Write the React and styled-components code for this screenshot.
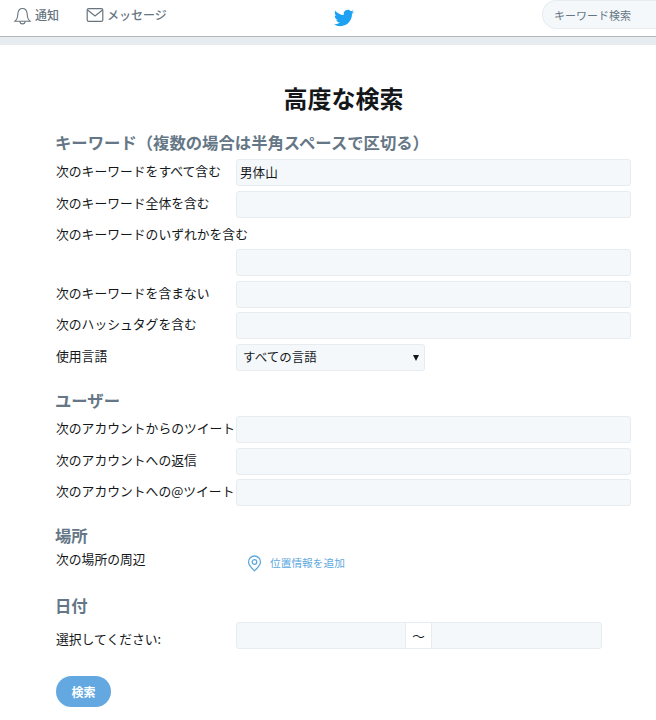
import React from "react";
import styled, { createGlobalStyle } from "styled-components";

const Global = createGlobalStyle`
  html, body { margin: 0; padding: 0; background: #fff; }
  body { font-family: "Noto Sans CJK JP", "Liberation Sans", sans-serif; color: #14171a; overflow: hidden; }
  * { box-sizing: border-box; }
`;
const Page = styled.div`width: 656px; height: 720px; overflow: hidden;`;
const TopBar = styled.header`
  height: 37px; display: grid; grid-template-columns: 334px 20px 1fr; align-items: center;
  border-bottom: 1px solid #b4b8bb; background: #fff;
`;
const Nav = styled.nav`display: flex; align-items: center; padding-left: 13px; gap: 27px; height: 32px; margin-top: -6px;`;
const NavItem = styled.span`display: flex; align-items: center; gap: 3px; font-size: 12px; font-weight: 500; color: #66757f; line-height: 16px;`;
const Logo = styled.svg`width: 20px; height: 20px; fill: #1da1f2; display: block; margin-top: -1px;`;
const SearchWrap = styled.div`display: flex; justify-content: flex-end; margin-top: -7px;`;
const SearchBox = styled.div`
  width: 114px; height: 29px; border-radius: 15px 0 0 15px;
  background: #f5f8fa; border: 1px solid #e6ecf0; border-right: 0;
  font-size: 11px; line-height: 29px; color: #657786; padding-left: 11px;
`;
const Band = styled.div`height: 8px; background: #e6ecf0;`;
const Main = styled.main`padding: 0 25px 0 56px;`;
const Title = styled.h1`margin: 0; padding-top: 36px; height: 86px; text-align: center; font-size: 24px; line-height: 34px; font-weight: 700; color: #14171a;`;
const SectionTitle = styled.h2`
  margin: 0 0 0 -1px; font-size: 16.350px; line-height: 22px; font-weight: 700; color: #657786; white-space: nowrap;
  height: ${p => p.$h}px;
`;
const Row = styled.div`display: flex; align-items: flex-start; height: ${p => p.$h || 31.7}px;`;
const Label = styled.label`width: 180px; flex: none; font-size: 12.800px; line-height: 23px; color: #14171a; white-space: nowrap; margin-top: ${p => p.$top || 0}px;`;
const Input = styled.div`
  width: 395px; height: 27px; background: #f5f8fa; border: 1px solid #e6ecf0; border-radius: 3px;
  font-size: 12.600px; line-height: 23px; padding-left: 3px; color: #14171a;
`;
const Select = styled.div`
  width: 189px; height: 27px; background: #f5f8fa; border: 1px solid #e6ecf0; border-radius: 3px;
  font-size: 12.500px; line-height: 23px; padding: 0 4px 0 6px; display: flex; justify-content: space-between; align-items: center; color: #14171a;
`;
const SelectText = styled.span`display: block; margin-top: -3px;`;
const Caret = styled.span`width: 0; height: 0; border-left: 3px solid transparent; border-right: 3px solid transparent; border-top: 6px solid #14171a; margin-right: 1px;`;
const Spacer = styled.div`width: 180px; flex: none;`;
const Location = styled.div`display: flex; align-items: center; gap: 8px; padding-left: 11px; height: 30px; margin-top: -2px; font-size: 10.700px; color: #5ea9dd;`;
const PinIcon = styled.svg`width: 15px; height: 17px; display: block; margin-top: 3px; fill: none; stroke: #5ea9dd; stroke-width: 1.3;`;
const DateGroup = styled.div`display: grid; grid-template-columns: 168px 27px 1fr; width: 366px; height: 27px; background: #f5f8fa; border: 1px solid #e6ecf0; border-radius: 3px;`;
const DateField = styled.div``;
const Tilde = styled.div`background: #fff; border-left: 1px solid #e6ecf0; border-right: 1px solid #e6ecf0; font-size: 12.600px; line-height: 25px; text-align: center; color: #14171a;`;
const Submit = styled.button`
  display: block; width: 55px; height: 31px; margin-top: 27px; padding: 0; border: 0; border-radius: 16px;
  background: #63a8e0; color: #fff; font: 700 12px/29px "Noto Sans CJK JP", sans-serif;
`;

export default function App() {
  return (
    <Page>
      <Global />
      <TopBar>
        <Nav>
          <NavItem>
            <svg width="19" height="19" viewBox="0 0 19 19" fill="none" stroke="#66757f" strokeWidth="1.1">
              <path d="M2 15.2c1.5-1.2 2.3-2.4 2.5-4.4l.4-3.3C5.2 4.6 7 2.5 9.5 2.5s4.3 2.1 4.6 5l.4 3.3c.2 2 1 3.2 2.5 4.4z" />
              <path d="M7 15.5c0 1.5 1.1 2.4 2.5 2.4s2.5-.9 2.5-2.4" />
            </svg>
            通知
          </NavItem>
          <NavItem>
            <svg width="18" height="16" viewBox="0 0 18 16" fill="none" stroke="#66757f" strokeWidth="1.2">
              <rect x="1.2" y="1.6" width="15.6" height="12.8" rx="1.5" />
              <path d="M1.5 3l7.5 6 7.500-6" />
            </svg>
            メッセージ
          </NavItem>
        </Nav>
        <Logo viewBox="0 0 24 24">
          <path d="M23.950 4.570a10 10 0 0 1-2.820.770 4.960 4.960 0 0 0 2.160-2.720c-.950.550-2 .950-3.130 1.190a4.920 4.920 0 0 0-8.380 4.480C7.690 8.090 4.070 6.130 1.640 3.160a4.820 4.820 0 0 0-.670 2.480c0 1.710.870 3.210 2.190 4.100a4.900 4.900 0 0 1-2.230-.620v.060a4.920 4.920 0 0 0 3.950 4.830c-.720.190-1.480.220-2.220.080a4.940 4.940 0 0 0 4.600 3.420A9.870 9.870 0 0 1 0 19.540a14 14 0 0 0 7.560 2.210c9.050 0 14-7.500 14-13.980 0-.210 0-.420-.020-.630a9.940 9.940 0 0 0 2.460-2.550z" />
        </Logo>
        <SearchWrap><SearchBox>キーワード検索</SearchBox></SearchWrap>
      </TopBar>
      <Band />
      <Main>
        <Title>高度な検索</Title>
        <SectionTitle $h={28}>キーワード（複数の場合は半角スペースで区切る）</SectionTitle>
        <Row $h={32}><Label>次のキーワードをすべて含む</Label><Input>男体山</Input></Row>
        <Row $h={32}><Label>次のキーワード全体を含む</Label><Input /></Row>
        <Row $h={26}><Label $top={-1}>次のキーワードのいずれかを含む</Label></Row>
        <Row><Spacer /><Input /></Row>
        <Row><Label>次のキーワードを含まない</Label><Input /></Row>
        <Row><Label>次のハッシュタグを含む</Label><Input /></Row>
        <Row $h={45}><Label>使用言語</Label><Select><SelectText>すべての言語</SelectText><Caret /></Select></Row>
        <SectionTitle $h={27}>ユーザー</SectionTitle>
        <Row $h={32}><Label>次のアカウントからのツイート</Label><Input /></Row>
        <Row $h={31}><Label>次のアカウントへの返信</Label><Input /></Row>
        <Row $h={45}><Label>次のアカウントへの@ツイート</Label><Input /></Row>
        <SectionTitle $h={25}>場所</SectionTitle>
        <Row $h={45}><Label $top={-2}>次の場所の周辺</Label><Location>
          <PinIcon viewBox="0 0 15 17">
            <path d="M7.500 15.800C4 12.600 1.500 10 1.500 7a6 6 0 0 1 12 0c0 3-2.500 5.600-6 8.800z" />
            <circle cx="7.500" cy="7" r="2.300" />
          </PinIcon>
          位置情報を追加
        </Location></Row>
        <SectionTitle $h={28}>日付</SectionTitle>
        <Row $h={27}><Label $top={5}>選択してください:</Label>
          <DateGroup><DateField /><Tilde>～</Tilde><DateField /></DateGroup>
        </Row>
        <Submit>検索</Submit>
      </Main>
    </Page>
  );
}
